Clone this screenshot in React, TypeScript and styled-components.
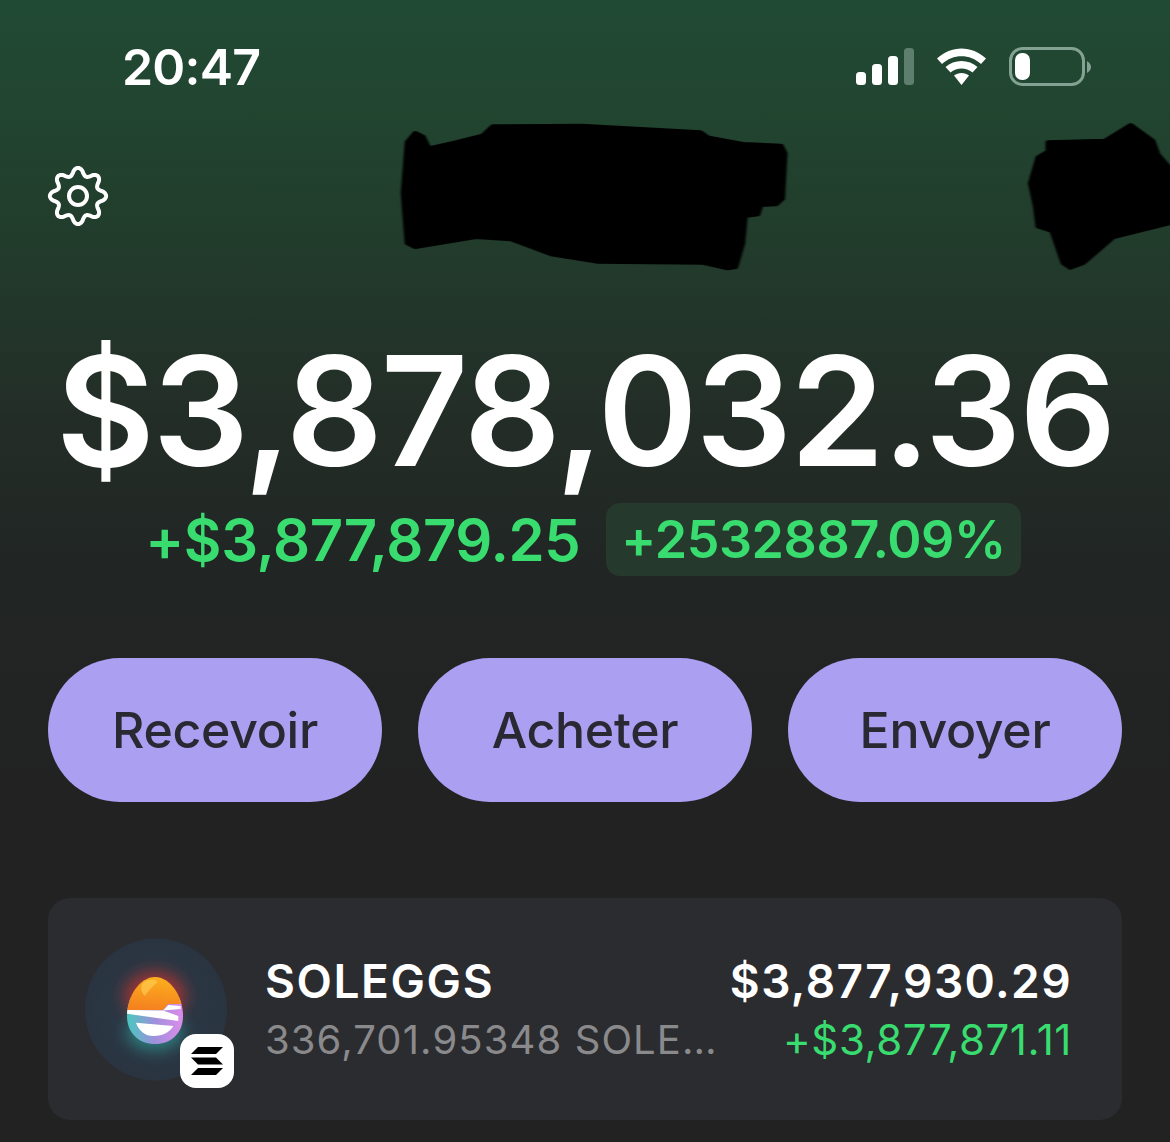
import React from 'react';
import styled, { createGlobalStyle } from 'styled-components';

const GlobalStyle = createGlobalStyle`
  html, body {
    margin: 0;
    padding: 0;
    background: #222222;
  }
  * {
    box-sizing: border-box;
  }
`;

const Page = styled.div`
  width: 1170px;
  height: 1142px;
  overflow: hidden;
  display: flex;
  flex-direction: column;
  font-family: 'Inter', 'Liberation Sans', sans-serif;
  color: #ffffff;
  background: linear-gradient(180deg, #214a35 0px, #21442f 120px, #22392b 280px, #232d27 420px, #212624 560px, #222222 800px);
`;

const StatusBar = styled.div`
  height: 110px;
  display: flex;
  justify-content: space-between;
  padding: 38px 81px 0 122px;
`;

const Time = styled.div`
  font-size: 50px;
  line-height: 58px;
  font-weight: 600;
  letter-spacing: -0.8px;
`;

const StatusIcons = styled.svg`
  width: 240px;
  height: 50px;
  margin-top: 8px;
  overflow: visible;
`;

const HeaderRow = styled.div`
  height: 180px;
  display: flex;
  justify-content: space-between;
  padding-left: 46px;
`;

const GearIcon = styled.svg`
  width: 64px;
  height: 64px;
  margin-top: 54px;
`;

const Redaction = styled.svg`
  width: 790px;
  height: 180px;
`;

const Balance = styled.div`
  margin-top: 36px;
  height: 170px;
  text-align: center;
  font-size: 152px;
  line-height: 170px;
  font-weight: 600;
  letter-spacing: -2.3px;
  white-space: nowrap;
`;

const ChangeRow = styled.div`
  margin-top: 7px;
  height: 73px;
  display: flex;
  justify-content: center;
  align-items: center;
  gap: 26px;
  padding-right: 4px;
  color: #39dc6f;
  font-weight: 600;
  white-space: nowrap;
`;

const ChangeAmount = styled.div`
  font-size: 58px;
  letter-spacing: -0.4px;
`;

const PercentBadge = styled.div`
  height: 73px;
  padding: 0 15px;
  display: flex;
  align-items: center;
  border-radius: 14px;
  background: #25392d;
  font-size: 52px;
  letter-spacing: -0.4px;
`;

const Buttons = styled.div`
  margin-top: 82px;
  padding: 0 48px;
  display: grid;
  grid-template-columns: repeat(3, 1fr);
  gap: 36px;
`;

const ActionButton = styled.button`
  height: 144px;
  border: none;
  border-radius: 72px;
  background: #ab9ff2;
  color: #2a2832;
  font-family: inherit;
  font-size: 50px;
  font-weight: 500;
  letter-spacing: -0.3px;
`;

const TokenCard = styled.div`
  margin: 96px 48px 0;
  height: 222px;
  border-radius: 22px;
  background: #2b2c30;
  display: flex;
  align-items: center;
  padding: 0 50px 0 37px;
`;

const TokenLogo = styled.div`
  position: relative;
  width: 142px;
  height: 143px;
  flex: none;
  margin-right: 38px;
`;

const LogoArt = styled.svg`
  width: 142px;
  height: 143px;
  display: block;
`;

const ChainBadge = styled.div`
  position: absolute;
  left: 95px;
  top: 96px;
  width: 54px;
  height: 54px;
  border-radius: 16px;
  background: #ffffff;
  display: flex;
  align-items: center;
  justify-content: center;
`;

const TokenColumn = styled.div<{ $end?: boolean }>`
  display: flex;
  flex-direction: column;
  gap: 9px;
  align-items: ${({ $end }) => ($end ? 'flex-end' : 'flex-start')};
  margin-left: ${({ $end }) => ($end ? 'auto' : '0')};
  white-space: nowrap;
`;

const TokenName = styled.div`
  font-size: 46px;
  line-height: 52px;
  font-weight: 600;
  letter-spacing: 1.6px;
`;

const TokenAmount = styled.div`
  font-size: 40px;
  line-height: 48px;
  color: #8a8a8c;
  letter-spacing: 1.1px;
`;

const TokenValue = styled(TokenName)`
  letter-spacing: 1.4px;
`;

const TokenChange = styled(TokenAmount)`
  font-size: 42px;
  color: #39dc6f;
  letter-spacing: 0.6px;
`;

const gearPath = (() => {
  const points: string[] = [];
  for (let i = 0; i <= 240; i += 1) {
    const a = (i / 240) * Math.PI * 2;
    const wave = Math.cos(a * 8);
    const r = 24.5 + 3.6 * Math.sign(wave) * Math.pow(Math.abs(wave), 0.8);
    points.push(`${(32 + r * Math.sin(a)).toFixed(2)} ${(32 - r * Math.cos(a)).toFixed(2)}`);
  }
  return `M${points.join('L')}Z`;
})();

const App = () => (
  <Page>
    <GlobalStyle />
    <StatusBar>
      <Time>20:47</Time>
      <StatusIcons viewBox="849 46 240 50">
        <rect x="856" y="72" width="10" height="13" rx="3.5" fill="#fff" />
        <rect x="872" y="64" width="10" height="21" rx="3.5" fill="#fff" />
        <rect x="888" y="56" width="10" height="29" rx="3.5" fill="#fff" />
        <rect x="904" y="48" width="10" height="37" rx="3.5" fill="#5f7f6e" />
        <path d="M937 58.5 C951 45 972 45 986 58.5 L981 64 C970 53.5 953 53.5 942 64 Z" fill="#fff" />
        <path d="M945.5 67 C954 59 969 59 977.5 67 L972.5 72.5 C966 67 957 67 950.5 72.5 Z" fill="#fff" />
        <path d="M954 75.5 C958 72 965 72 969 75.5 L961.5 85 Z" fill="#fff" />
        <rect x="1010.5" y="48.5" width="73" height="36" rx="12" fill="none" stroke="#84a293" strokeWidth="3" />
        <rect x="1015" y="53" width="15" height="27" rx="7" fill="#fff" />
        <path d="M1087 61 C1090 63 1091 65 1091 67 C1091 69 1090 71 1087 73 Z" fill="#84a293" />
      </StatusIcons>
    </StatusBar>

    <HeaderRow>
      <GearIcon viewBox="0 0 64 64" fill="none" stroke="#fff" strokeWidth="4" strokeLinejoin="round">
        <path d={gearPath} />
        <circle cx="32" cy="32" r="9" />
      </GearIcon>
      <Redaction viewBox="0 0 790 180">
        <defs>
          <filter id="soft">
            <feGaussianBlur stdDeviation="1.6" />
          </filter>
        </defs>
        <g transform="scale(0.5038 0.3333)" fill="#000" stroke="#000" strokeWidth="10" strokeLinejoin="round" filter="url(#soft)">
          <path d="M46 250 L54 96 L70 68 L86 80 L97 114 L150 96 L204 76 L224 48 L400 46 L636 66 L650 81 L720 101 L796 106 L804 130 L799 266 L786 284 L756 286 L750 314 L725 319 L720 400 L706 472 L690 476 L640 459 L430 456 L340 434 L260 389 L190 382 L70 412 L54 400 Z" />
          <path d="M1291 220 L1306 142 L1326 124 L1326 96 L1440 91 L1490 44 L1534 92 L1544 132 L1568 174 L1568 340 L1456 382 L1396 460 L1370 474 L1356 460 L1334 364 L1306 350 L1301 290 Z" />
        </g>
      </Redaction>
    </HeaderRow>

    <Balance>$3,878,032.36</Balance>

    <ChangeRow>
      <ChangeAmount>+$3,877,879.25</ChangeAmount>
      <PercentBadge>+2532887.09%</PercentBadge>
    </ChangeRow>

    <Buttons>
      <ActionButton>Recevoir</ActionButton>
      <ActionButton>Acheter</ActionButton>
      <ActionButton>Envoyer</ActionButton>
    </Buttons>

    <TokenCard>
      <TokenLogo>
        <LogoArt viewBox="0 0 142 143">
          <defs>
            <linearGradient id="shell" x1="0.55" y1="0" x2="0.4" y2="1">
              <stop offset="0" stopColor="#fcb41e" />
              <stop offset="1" stopColor="#f5801f" />
            </linearGradient>
            <linearGradient id="base" x1="0" y1="0" x2="1" y2="0">
              <stop offset="0" stopColor="#3bd0bc" />
              <stop offset="0.5" stopColor="#9f90dc" />
              <stop offset="1" stopColor="#e48cec" />
            </linearGradient>
            <radialGradient id="disc" cx="0.5" cy="0.5" r="0.5">
              <stop offset="0" stopColor="#2d3a48" />
              <stop offset="1" stopColor="#2a3441" />
            </radialGradient>
            <filter id="glow" x="-50%" y="-50%" width="200%" height="200%">
              <feGaussianBlur stdDeviation="8" />
            </filter>
            <clipPath id="eggShape">
              <path d="M70 39 C85 39 98 58 98 78 C98 96 85 106 70 106 C55 106 42 96 42 78 C42 58 55 39 70 39 Z" />
            </clipPath>
          </defs>
          <circle cx="71" cy="71.5" r="71" fill="url(#disc)" />
          <ellipse cx="70" cy="58" rx="30" ry="24" fill="#c9352f" opacity="0.75" filter="url(#glow)" />
          <ellipse cx="70" cy="94" rx="28" ry="18" fill="#2e9f9a" opacity="0.7" filter="url(#glow)" />
          <g clipPath="url(#eggShape)">
            <rect x="38" y="60" width="64" height="50" fill="url(#base)" />
            <path d="M38 36 H102 V66 H83 L78 72 H38 Z" fill="url(#shell)" />
            <path d="M58 45 C63 41 69 41 73 44 C69 47 63 53 60 58 C56 55 55 49 58 45 Z" fill="#ffd65e" opacity="0.55" />
            <path d="M83.3 67 L95.7 68 L95.7 71 L78 72.5 Z" fill="#fff" />
            <path d="M40 72 L78 72.5 L93.3 78 L93.3 83 L40 75.5 Z" fill="#fff" />
            <path d="M51 84.7 L88.3 88 C85 94 78 98 68.5 98 C60 98 54 93 51 84.7 Z" fill="#fff" />
          </g>
        </LogoArt>
        <ChainBadge>
          <svg width="32" height="28" viewBox="0 0 32 28" fill="#000">
            <path d="M7 0 H32 L25 7 H0 Z" />
            <path d="M0 10.5 H25 L32 17.5 H7 Z" />
            <path d="M7 21 H32 L25 28 H0 Z" />
          </svg>
        </ChainBadge>
      </TokenLogo>
      <TokenColumn>
        <TokenName>SOLEGGS</TokenName>
        <TokenAmount>336,701.95348 SOLE…</TokenAmount>
      </TokenColumn>
      <TokenColumn $end>
        <TokenValue>$3,877,930.29</TokenValue>
        <TokenChange>+$3,877,871.11</TokenChange>
      </TokenColumn>
    </TokenCard>
  </Page>
);

export default App;
